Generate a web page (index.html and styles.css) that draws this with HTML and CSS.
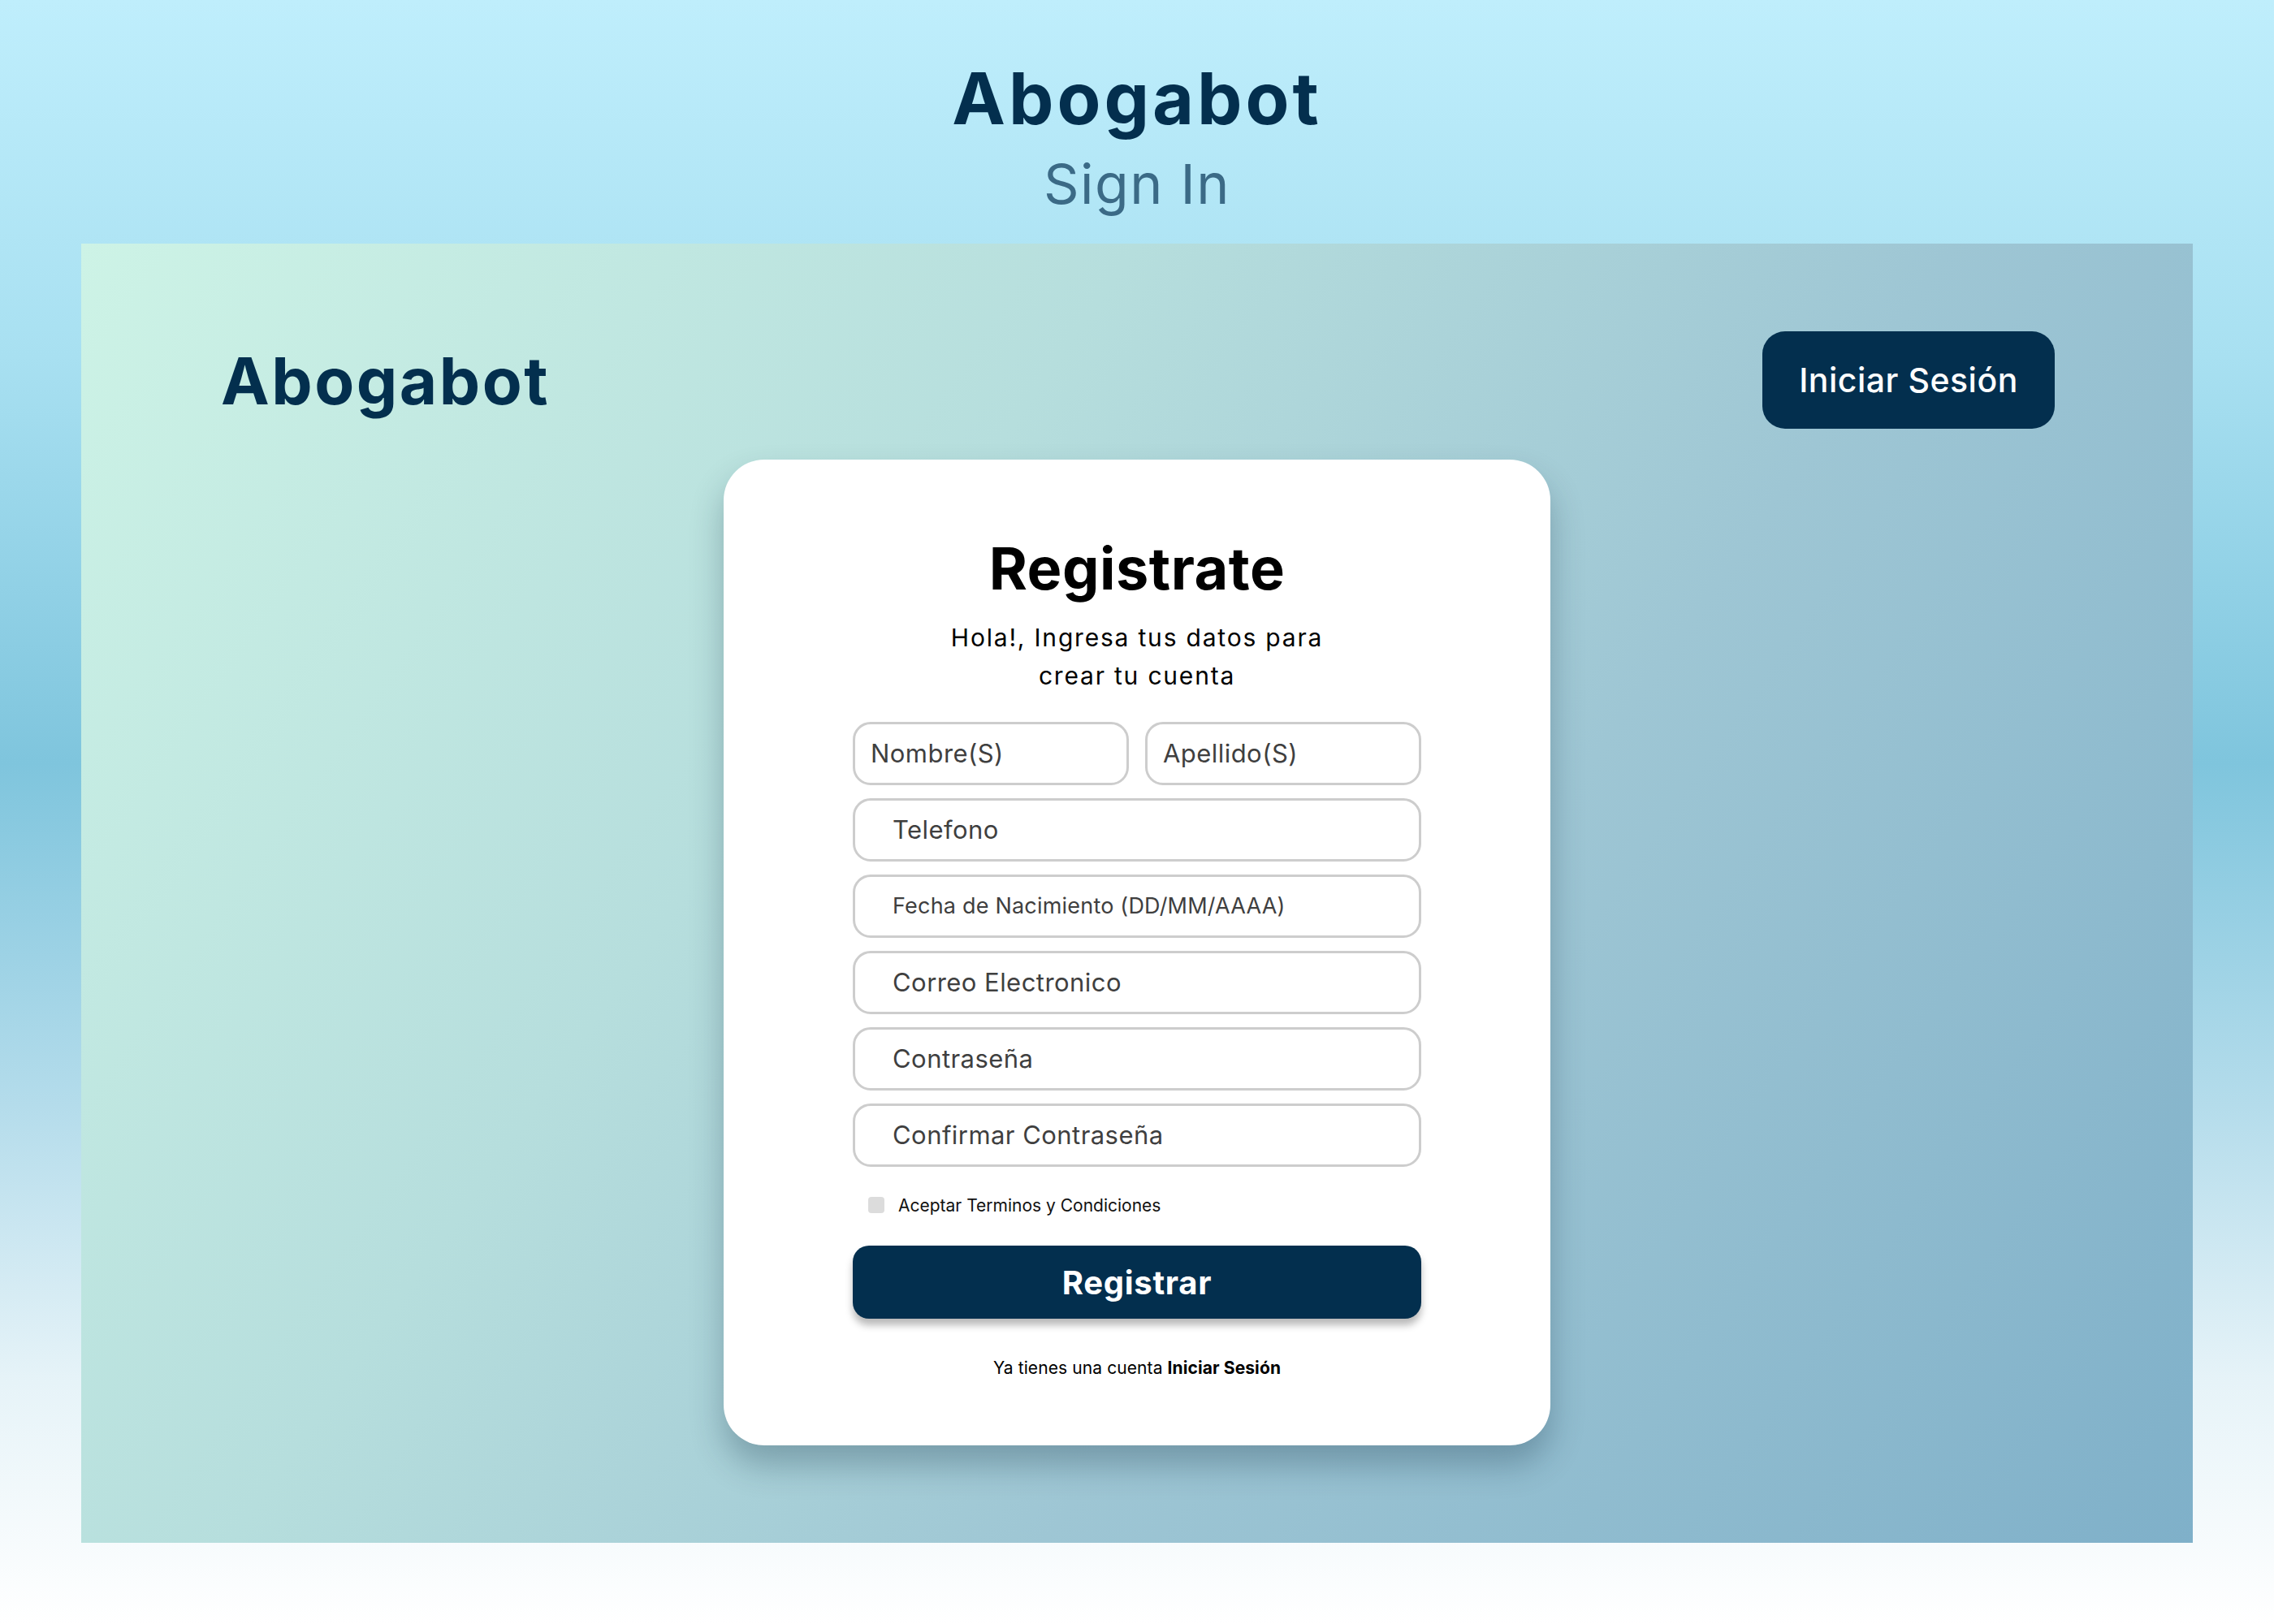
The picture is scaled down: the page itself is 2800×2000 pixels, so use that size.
FILE: index.html
```html
<!DOCTYPE html>
<html lang="es">
<head>
<meta charset="utf-8">
<title>Abogabot - Sign In</title>
<link rel="stylesheet" href="styles.css">
</head>
<body>
<header class="page-header">
  <h1 class="page-title">Abogabot</h1>
  <p class="page-subtitle">Sign In</p>
</header>
<main class="panel">
  <nav class="topbar">
    <div class="brand">Abogabot</div>
    <button class="btn-login" type="button">Iniciar Sesión</button>
  </nav>
  <section class="card">
    <h2 class="card-title">Registrate</h2>
    <p class="card-sub">Hola!, Ingresa tus datos para<br>crear tu cuenta</p>
    <div class="form">
      <div class="row-2">
        <div class="field field-tight">Nombre(S)</div>
        <div class="field field-tight">Apellido(S)</div>
      </div>
      <div class="field">Telefono</div>
      <div class="field field-small">Fecha de Nacimiento (DD/MM/AAAA)</div>
      <div class="field">Correo Electronico</div>
      <div class="field">Contraseña</div>
      <div class="field">Confirmar Contraseña</div>
    </div>
    <label class="terms"><span class="checkbox"></span><span>Aceptar Terminos y Condiciones</span></label>
    <button class="btn-register" type="button">Registrar</button>
    <p class="footer-text">Ya tienes una cuenta <strong>Iniciar Sesión</strong></p>
  </section>
</main>
</body>
</html>
```

FILE: styles.css
```css
* { box-sizing: border-box; }

html, body {
  margin: 0;
  padding: 0;
}

body {
  min-height: 2000px;
  font-family: "Inter", "Noto Sans", sans-serif;
  background: linear-gradient(180deg, #bfeefc 0%, #a8e0f1 22%, #7fc5dd 47%, #b4dceb 68%, #e6f3f8 85%, #ffffff 100%);
  color: #000;
}

.page-header {
  height: 300px;
  padding-top: 71px;
  text-align: center;
}

.page-title {
  margin: 0;
  font-size: 88px;
  line-height: 100px;
  font-weight: 700;
  color: #032f4e;
  letter-spacing: 4px;
}

.page-subtitle {
  margin: 15px 0 0;
  font-size: 68px;
  line-height: 80px;
  font-weight: 400;
  color: #3b6a86;
  letter-spacing: 1.5px;
}

.panel {
  margin: 0 100px;
  height: 1600px;
  background: linear-gradient(125deg, #cdf3e6 0%, #b6dedd 35%, #9ec6d4 62%, #7fb0c9 100%);
  display: flex;
  flex-direction: column;
  align-items: center;
}

.topbar {
  align-self: stretch;
  display: flex;
  justify-content: space-between;
  align-items: center;
  padding: 108px 170px 0 172px;
}

.brand {
  font-size: 80px;
  font-weight: 700;
  color: #032f4e;
  letter-spacing: 2.5px;
}

.btn-login {
  width: 360px;
  height: 120px;
  border: none;
  border-radius: 28px;
  background: #032f4e;
  color: #fff;
  font-family: inherit;
  font-size: 41px;
  font-weight: 500;
  letter-spacing: 0.5px;
}

.card {
  margin-top: 38px;
  width: 1018px;
  height: 1214px;
  background: #fff;
  border-radius: 50px;
  box-shadow: 0 24px 40px rgba(20, 50, 70, 0.3);
  padding: 94px 159px 0;
  display: flex;
  flex-direction: column;
  align-items: center;
}

.card-title {
  margin: 0;
  font-size: 72px;
  line-height: 80px;
  font-weight: 700;
  color: #000;
  letter-spacing: 0.5px;
}

.card-sub {
  margin: 22px 0 0;
  font-size: 30px;
  line-height: 47px;
  text-align: center;
  color: #000;
  letter-spacing: 1.8px;
}

.form {
  margin-top: 33px;
  width: 700px;
  display: flex;
  flex-direction: column;
  gap: 16px;
}

.row-2 {
  display: grid;
  grid-template-columns: 1fr 1fr;
  gap: 20px;
}

.field {
  height: 78px;
  border: 3px solid #cdcdcd;
  border-radius: 22px;
  display: flex;
  align-items: center;
  padding-left: 46px;
  padding-bottom: 2px;
  font-size: 31px;
  color: #3f3f3f;
  background: #fff;
  letter-spacing: 0.45px;
}

.field-tight {
  padding-left: 19px;
}

.field-small {
  font-size: 27px;
  letter-spacing: 0.2px;
}

.terms {
  margin-top: 37px;
  align-self: stretch;
  display: flex;
  align-items: center;
  gap: 17px;
  padding-left: 19px;
  height: 20px;
  font-size: 21px;
  color: #111;
}

.checkbox {
  width: 20px;
  height: 20px;
  border-radius: 4px;
  background: #dcdcdc;
}

.btn-register {
  margin-top: 40px;
  width: 700px;
  height: 90px;
  border: none;
  border-radius: 20px;
  background: #032f4e;
  color: #fff;
  font-family: inherit;
  font-size: 40px;
  font-weight: 700;
  letter-spacing: 0.7px;
  box-shadow: 0 8px 10px rgba(0, 0, 0, 0.28);
}

.footer-text {
  margin: 46px 0 0;
  font-size: 21px;
  line-height: 30px;
  color: #000;
  letter-spacing: 0.1px;
}

.footer-text strong {
  font-weight: 700;
}
```
